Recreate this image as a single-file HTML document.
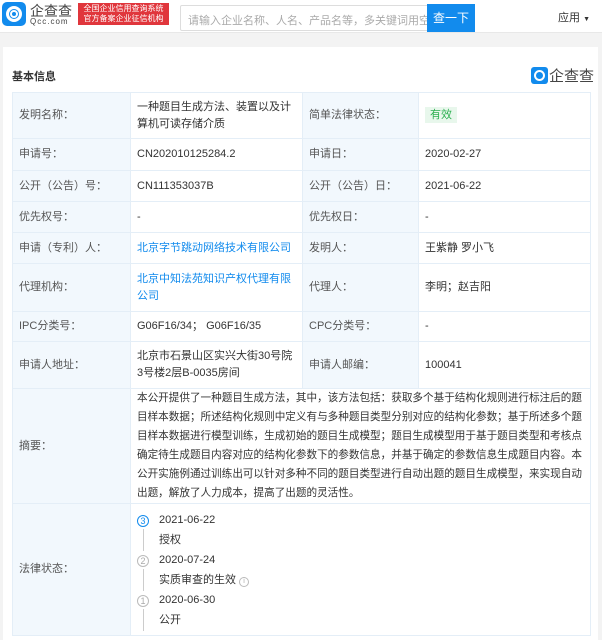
<!DOCTYPE html><html><head><meta charset="utf-8"><style>
*{margin:0;padding:0;box-sizing:border-box}
body{width:602px;height:640px;overflow:hidden;background:#f3f3f3;font-family:"Liberation Sans","Noto Sans CJK SC",sans-serif;color:#333;font-size:11px;position:relative}
.hd{position:absolute;left:0;top:0;width:602px;height:33px;background:#fff;border-bottom:1px solid #e8e8e8}
.ab{position:absolute}
.card{position:absolute;left:3px;top:47px;width:595px;height:593px;background:#fff}
table{position:absolute;left:12px;top:92px;width:578px;border-collapse:collapse;table-layout:fixed}
td{border:1px solid #e4eef7;padding:0 6px;font-size:11px;line-height:17px;vertical-align:middle}
td.l{background:#f2f8fd;color:#555}
a{color:#128bed;text-decoration:none}
.tl{position:relative;padding-left:24px;line-height:19px}
.c{position:absolute;left:0;width:12px;height:12px;border:1px solid #bbb;border-radius:50%;font-size:9px;line-height:10px;text-align:center;color:#aaa}
.ln{position:absolute;left:6px;width:1px;background:#ccc}
</style></head><body>
<div class="hd">
 <div class="ab" style="left:2px;top:2px;width:24px;height:24px;background:#128bed;border-radius:5px"><div class="ab" style="left:4px;top:4px;width:16px;height:16px;border:3px solid #fff;border-radius:50%"></div><div class="ab" style="left:8px;top:8px;width:8px;height:8px;border:2px solid #fff;border-radius:50%"></div></div>
 <div class="ab" style="left:30px;top:1px;font-size:14px;color:#444">企查查</div>
 <div class="ab" style="left:30px;top:17px;font-size:8px;color:#444;letter-spacing:1px">Qcc.com</div>
 <div class="ab" style="left:78px;top:3px;width:91px;height:22px;background:#e0363c;color:#fff;font-size:8px;line-height:10px;text-align:center;padding-top:1px">全国企业信用查询系统<br>官方备案企业征信机构</div>
 <div class="ab" style="left:180px;top:5px;width:249px;height:26px;border:1px solid #ddd;border-radius:2px;color:#aaa;padding:6px 7px;font-size:11px;white-space:nowrap;overflow:hidden">请输入企业名称、人名、产品名等，多关键词用空</div>
 <div class="ab" style="left:427px;top:4px;width:48px;height:28px;background:#128bed;color:#fff;font-size:12px;text-align:center;line-height:28px">查一下</div>
 <div class="ab" style="left:558px;top:9px;font-size:11px;color:#333">应用 <span style="font-size:7px">▼</span></div>
</div>
<div class="card"></div>
<div class="ab" style="left:12px;top:68px;font-size:11px;font-weight:bold;color:#333">基本信息</div>
<div class="ab" style="left:531px;top:67px;width:17px;height:17px;background:#128bed;border-radius:3px"><div class="ab" style="left:3px;top:3px;width:11px;height:11px;border:2px solid #fff;border-radius:50%"></div></div>
<div class="ab" style="left:549px;top:65px;font-size:15px;color:#444">企查查</div>
<table>
<colgroup><col style="width:118px"><col style="width:172px"><col style="width:116px"><col style="width:172px"></colgroup>
<tr style="height:46px"><td class="l">发明名称：</td><td>一种题目生成方法、装置以及计算机可读存储介质</td><td class="l">简单法律状态：</td><td><span style="background:#e8f7ec;color:#2cb050;padding:2px 5px">有效</span></td></tr>
<tr style="height:32px"><td class="l">申请号：</td><td>CN202010125284.2</td><td class="l">申请日：</td><td>2020-02-27</td></tr>
<tr style="height:31px"><td class="l">公开（公告）号：</td><td>CN111353037B</td><td class="l">公开（公告）日：</td><td>2021-06-22</td></tr>
<tr style="height:31px"><td class="l">优先权号：</td><td>-</td><td class="l">优先权日：</td><td>-</td></tr>
<tr style="height:31px"><td class="l">申请（专利）人：</td><td><a>北京字节跳动网络技术有限公司</a></td><td class="l">发明人：</td><td>王紫静 罗小飞</td></tr>
<tr style="height:48px"><td class="l">代理机构：</td><td><a>北京中知法苑知识产权代理有限公司</a></td><td class="l">代理人：</td><td>李明；赵吉阳</td></tr>
<tr style="height:30px"><td class="l">IPC分类号：</td><td>G06F16/34； G06F16/35</td><td class="l">CPC分类号：</td><td>-</td></tr>
<tr style="height:47px"><td class="l">申请人地址：</td><td>北京市石景山区实兴大街30号院3号楼2层B-0035房间</td><td class="l">申请人邮编：</td><td>100041</td></tr>
<tr style="height:115px"><td class="l">摘要：</td><td colspan="3" style="line-height:19px;font-size:10.6px">本公开提供了一种题目生成方法，其中，该方法包括：获取多个基于结构化规则进行标注后的题目样本数据；所述结构化规则中定义有与多种题目类型分别对应的结构化参数；基于所述多个题目样本数据进行模型训练，生成初始的题目生成模型；题目生成模型用于基于题目类型和考核点确定待生成题目内容对应的结构化参数下的参数信息，并基于确定的参数信息生成题目内容。本公开实施例通过训练出可以针对多种不同的题目类型进行自动出题的题目生成模型，来实现自动出题，解放了人力成本，提高了出题的灵活性。</td></tr>
<tr style="height:132px"><td class="l">法律状态：</td><td colspan="3"><div class="tl" style="height:118px">
<div class="c" style="top:4px;border-color:#128bed;color:#128bed">3</div><div class="ln" style="top:18px;height:22px"></div>
<div style="position:absolute;left:22px;top:0">2021-06-22</div><div style="position:absolute;left:22px;top:20px">授权</div>
<div class="c" style="top:44px">2</div><div class="ln" style="top:58px;height:22px"></div>
<div style="position:absolute;left:22px;top:40px">2020-07-24</div><div style="position:absolute;left:22px;top:60px">实质审查的生效 <span style="display:inline-block;width:10px;height:10px;border:1px solid #bbb;border-radius:50%;font-size:7px;line-height:8px;text-align:center;color:#aaa">i</span></div>
<div class="c" style="top:84px">1</div><div class="ln" style="top:98px;height:22px"></div>
<div style="position:absolute;left:22px;top:80px">2020-06-30</div><div style="position:absolute;left:22px;top:100px">公开</div>
</div></td></tr>
</table>
</body></html>
